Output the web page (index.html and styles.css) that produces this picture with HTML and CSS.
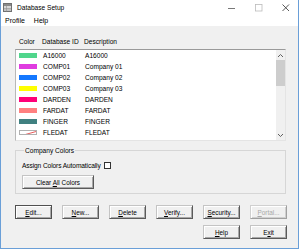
FILE: index.html
```html
<!DOCTYPE html>
<html>
<head>
<meta charset="utf-8">
<link rel="stylesheet" href="styles.css">
</head>
<body>
<div class="window">
  <div class="titlebar">
    <svg class="appicon" width="9" height="9" viewBox="0 0 9 9">
      <rect x="0.5" y="0.5" width="8" height="8" fill="#d8d8d8" stroke="#707070"/>
      <rect x="1" y="1" width="7" height="2" fill="#8a8a8a"/>
      <path d="M1 5.5H8M1 7H8M3.5 3V8.5" stroke="#909090" stroke-width="0.6"/>
    </svg>
    <span class="title">Database Setup</span>
    <div class="controls">
      <svg width="8" height="8" viewBox="0 0 8 8"><path d="M0 4.5H7" stroke="#555" stroke-width="0.8"/></svg>
      <svg width="8" height="8" viewBox="0 0 8 8"><rect x="0.5" y="0.5" width="6.5" height="6.5" fill="none" stroke="#bbb" stroke-width="0.8"/></svg>
      <svg width="8" height="8" viewBox="0 0 8 8"><path d="M0.5 0.5L7 7M7 0.5L0.5 7" stroke="#444" stroke-width="0.9"/></svg>
    </div>
  </div>
  <div class="menubar">
    <span class="menu">Profile</span>
    <span class="menu">Help</span>
  </div>
  <div class="content">
    <div class="colhead">
      <span>Color</span><span>Database ID</span><span>Description</span>
    </div>
    <div class="listbox">
      <div class="rows">
        <div class="row"><span class="sw" style="background:#50d68c"></span><span>A16000</span><span>A16000</span></div>
        <div class="row"><span class="sw" style="background:#e03ce0"></span><span>COMP01</span><span>Company 01</span></div>
        <div class="row"><span class="sw" style="background:#1478ff"></span><span>COMP02</span><span>Company 02</span></div>
        <div class="row"><span class="sw" style="background:#ffff00"></span><span>COMP03</span><span>Company 03</span></div>
        <div class="row"><span class="sw" style="background:#ff0078"></span><span>DARDEN</span><span>DARDEN</span></div>
        <div class="row"><span class="sw" style="background:#ff8080"></span><span>FARDAT</span><span>FARDAT</span></div>
        <div class="row"><span class="sw" style="background:#408080"></span><span>FINGER</span><span>FINGER</span></div>
        <div class="row"><span class="sw none"><svg width="18" height="5" viewBox="0 0 18 5"><path d="M0 5L18 0" stroke="#e03030" stroke-width="0.8"/></svg></span><span>FLEDAT</span><span>FLEDAT</span></div>
        <div class="row"><span class="sw" style="background:#c0fff8"></span><span>GOLDAT</span><span>GOLDAT</span></div>
      </div>
      <div class="vscroll">
        <svg class="arrow" width="7" height="5" viewBox="0 0 7 5"><path d="M1 4L3.5 1.5L6 4" fill="none" stroke="#606060" stroke-width="1"/></svg>
        <div class="thumb"></div>
        <div class="track"></div>
        <svg class="arrow" width="7" height="5" viewBox="0 0 7 5"><path d="M1 1L3.5 3.5L6 1" fill="none" stroke="#606060" stroke-width="1"/></svg>
      </div>
    </div>
    <fieldset class="group">
      <legend>Company Colors</legend>
      <div class="assign">
        <span>Assign Colors Automatically</span>
        <span class="check"></span>
      </div>
      <button class="btn clear">Clear <u>A</u>ll Colors</button>
    </fieldset>
    <div class="btnrow">
      <button class="btn def"><u>E</u>dit...</button>
      <button class="btn"><u>N</u>ew...</button>
      <button class="btn"><u>D</u>elete</button>
      <button class="btn"><u>V</u>erify...</button>
      <button class="btn"><u>S</u>ecurity...</button>
      <button class="btn disabled"><u>P</u>ortal...</button>
    </div>
    <div class="btnrow right">
      <button class="btn"><u>H</u>elp</button>
      <button class="btn">E<u>x</u>it</button>
    </div>
  </div>
</div>
</body>
</html>
```
FILE: styles.css
```css
html, body {
  margin: 0;
  padding: 0;
  background: #ffffff;
}
body {
  font-family: "Liberation Sans", Arial, sans-serif;
  font-size: 6.6px;
  color: #000;
}
.window {
  width: 299px;
  height: 249px;
  box-sizing: border-box;
  border: 1px solid #6a9fd8;
  border-top: none;
  display: flex;
  flex-direction: column;
  background: #f0f0f0;
}
.titlebar {
  height: 16px;
  flex: none;
  background: #fff;
  display: flex;
  align-items: center;
  padding-left: 2px;
}
.appicon {
  display: block;
  margin-top: -2px;
}
.title {
  margin-left: 5px;
  margin-top: -2px;
  font-size: 6.6px;
}
.controls {
  margin-left: auto;
  display: flex;
  gap: 19px;
  margin-right: 8px;
  margin-top: -1px;
}
.controls svg { display: block; }
.menubar {
  height: 10px;
  flex: none;
  box-sizing: border-box;
  background: #fff;
  display: flex;
  align-items: center;
  padding-left: 4px;
  gap: 9px;
  font-size: 7px;
  padding-bottom: 1px;
}
.content {
  flex: 1;
  display: flex;
  flex-direction: column;
  padding: 0 0 0 14px;
}
.colhead {
  margin-top: 11px;
  height: 10px;
  line-height: 10px;
  display: grid;
  grid-template-columns: 23px 42px auto;
  padding-left: 4px;
}
.listbox {
  margin-top: 2px;
  width: 271px;
  height: 92px;
  flex: none;
  box-sizing: border-box;
  background: #fff;
  border: 1px solid #b8b8b8;
  border-top-color: #9a9a9a;
  border-right-color: #e4e4e4;
  border-bottom-color: #e4e4e4;
  display: flex;
  overflow: hidden;
}
.rows {
  flex: 1;
  overflow: hidden;
}
.row {
  height: 11px;
  display: grid;
  grid-template-columns: 18px 42px auto;
  column-gap: 6px;
  align-items: center;
  padding-left: 3px;
  line-height: 11px;
}
.row span:nth-child(3) { margin-left: -6px; }
.sw {
  display: block;
  width: 18px;
  height: 5px;
  box-sizing: border-box;
}
.sw.none {
  background: #fff;
  border: 0.5px solid #b0b0b0;
  overflow: hidden;
}
.sw.none svg { display: block; margin: -0.5px; }
.vscroll {
  width: 9px;
  background: #f0f0f0;
  display: flex;
  flex-direction: column;
  align-items: center;
}
.arrow {
  display: block;
  margin: 3px 0 2px;
}
.thumb {
  width: 9px;
  height: 26px;
  background: #cdcdcd;
}
.track { flex: 1; }
.group {
  margin: 5px 0 0;
  width: 271px;
  height: 48px;
  flex: none;
  box-sizing: border-box;
  padding: 0 0 0 6px;
  border: 1px solid #d6d6d6;
  min-inline-size: 0;
}
.group legend {
  padding: 0 1px;
  margin-left: 2px;
  line-height: 9px;
}
.assign {
  margin-top: 6px;
  display: flex;
  align-items: center;
  height: 8px;
  gap: 3px;
  letter-spacing: -0.1px;
}
.check {
  display: block;
  width: 7px;
  height: 7px;
  box-sizing: border-box;
  background: #fff;
  border: 1px solid #333;
}
.btn {
  font-family: "Liberation Sans", Arial, sans-serif;
  font-size: 6.4px;
  color: #000;
  background: #f0f0f0;
  width: 37px;
  height: 14px;
  padding: 0;
  margin: 0;
  box-sizing: border-box;
  border: 1px solid;
  border-color: #c4c4c4 #5a5a5a #5a5a5a #c4c4c4;
  box-shadow: inset 1px 1px 0 #fff, inset -1px -1px 0 #a8a8a8;
  line-height: 11px;
}
.btn u { text-decoration-thickness: 0.5px; text-underline-offset: 1px; }
.btn.def { border-color: #505050; }
.btn.disabled { color: #a8a8a8; border-color: #d0d0d0 #a0a0a0 #a0a0a0 #d0d0d0; box-shadow: inset 1px 1px 0 #fff, inset -1px -1px 0 #d0d0d0; }
.clear {
  width: 72px;
  margin-top: 6px;
}
.btnrow {
  display: flex;
  gap: 10px;
  margin-top: 11px;
}
.btnrow.right {
  margin-top: 6px;
  padding-left: 188px;
}
```
